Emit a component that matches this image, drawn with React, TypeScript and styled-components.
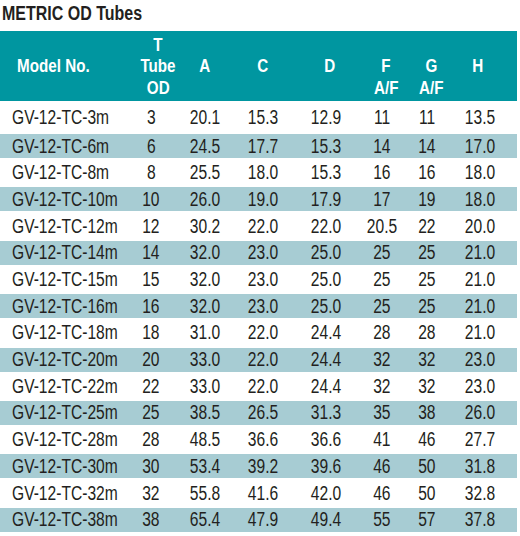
import styled, { createGlobalStyle } from 'styled-components';

const GlobalStyle = createGlobalStyle`
  html, body {
    margin: 0;
    padding: 0;
    background: #ffffff;
  }
  body {
    font-family: "Liberation Sans", Arial, sans-serif;
    color: #231f20;
  }
`;

const COLUMNS = '126px 50px 58px 58px 68px 44px 46px 60px 1fr';

const Page = styled.div`
  width: 517px;
`;

// the source uses a condensed face; squeeze Liberation Sans to match
const Narrow = styled.span<{ $origin?: string }>`
  display: inline-block;
  white-space: nowrap;
  transform: scaleX(0.8);
  transform-origin: ${(p) => p.$origin ?? 'center'};
`;

const Title = styled.h2`
  margin: 0;
  height: 31px;
  padding-left: 2px;
  font-size: 20px;
  font-weight: 700;
  line-height: 27px;
  color: #231f20;
`;

const HeaderRow = styled.div`
  display: grid;
  grid-template-columns: ${COLUMNS};
  height: 70px;
  background: #0096a0;
  color: #ffffff;
  font-weight: 700;
  font-size: 19px;
`;

// shift moves the label off the column centre (px)
const HeaderCell = styled.div<{ $shift?: number }>`
  display: grid;
  grid-template-rows: repeat(3, 21.5px);
  align-content: center;
  justify-items: center;
  padding-left: ${(p) => Math.max(p.$shift ?? 0, 0) * 2}px;
  padding-right: ${(p) => Math.max(-(p.$shift ?? 0), 0) * 2}px;
  line-height: 21.5px;
`;

const HeaderLine = styled.span<{ $row: number }>`
  grid-row: ${(p) => p.$row};
`;

const BodyRow = styled.div<{ $alt: boolean }>`
  display: grid;
  grid-template-columns: ${COLUMNS};
  align-items: center;
  height: ${(p) => (p.$alt ? 24 : 29.4)}px;
  background: ${(p) => (p.$alt ? '#a7ccd3' : '#ffffff')};
  font-size: 19.5px;

  &:first-child {
    height: 33px;
  }
`;

const Cell = styled.div<{ $left?: boolean }>`
  text-align: ${(p) => (p.$left ? 'left' : 'center')};
  padding-left: ${(p) => (p.$left ? '12px' : '0')};
  white-space: nowrap;
`;

const headers: { lines: string[]; start: number; shift?: number }[] = [
  { lines: ['Model No.'], start: 2, shift: -10 },
  { lines: ['T', 'Tube', 'OD'], start: 1, shift: 5 },
  { lines: ['A'], start: 2 },
  { lines: ['C'], start: 2 },
  { lines: ['D'], start: 2, shift: 4 },
  { lines: ['F', 'A/F'], start: 2, shift: 4 },
  { lines: ['G', 'A/F'], start: 2, shift: 4 },
  { lines: ['H'], start: 2, shift: -2 },
];

const rows: string[][] = [
  ['GV-12-TC-3m', '3', '20.1', '15.3', '12.9', '11', '11', '13.5'],
  ['GV-12-TC-6m', '6', '24.5', '17.7', '15.3', '14', '14', '17.0'],
  ['GV-12-TC-8m', '8', '25.5', '18.0', '15.3', '16', '16', '18.0'],
  ['GV-12-TC-10m', '10', '26.0', '19.0', '17.9', '17', '19', '18.0'],
  ['GV-12-TC-12m', '12', '30.2', '22.0', '22.0', '20.5', '22', '20.0'],
  ['GV-12-TC-14m', '14', '32.0', '23.0', '25.0', '25', '25', '21.0'],
  ['GV-12-TC-15m', '15', '32.0', '23.0', '25.0', '25', '25', '21.0'],
  ['GV-12-TC-16m', '16', '32.0', '23.0', '25.0', '25', '25', '21.0'],
  ['GV-12-TC-18m', '18', '31.0', '22.0', '24.4', '28', '28', '21.0'],
  ['GV-12-TC-20m', '20', '33.0', '22.0', '24.4', '32', '32', '23.0'],
  ['GV-12-TC-22m', '22', '33.0', '22.0', '24.4', '32', '32', '23.0'],
  ['GV-12-TC-25m', '25', '38.5', '26.5', '31.3', '35', '38', '26.0'],
  ['GV-12-TC-28m', '28', '48.5', '36.6', '36.6', '41', '46', '27.7'],
  ['GV-12-TC-30m', '30', '53.4', '39.2', '39.6', '46', '50', '31.8'],
  ['GV-12-TC-32m', '32', '55.8', '41.6', '42.0', '46', '50', '32.8'],
  ['GV-12-TC-38m', '38', '65.4', '47.9', '49.4', '55', '57', '37.8'],
];

export default function App() {
  return (
    <Page>
      <GlobalStyle />
      <Title>
        <Narrow $origin="left">METRIC OD Tubes</Narrow>
      </Title>
      <HeaderRow>
        {headers.map((h, i) => (
          <HeaderCell key={i} $shift={h.shift}>
            {h.lines.map((line, j) => (
              <HeaderLine key={j} $row={h.start + j}>
                <Narrow>{line}</Narrow>
              </HeaderLine>
            ))}
          </HeaderCell>
        ))}
      </HeaderRow>
      <div>
        {rows.map((r, i) => (
          <BodyRow key={r[0]} $alt={i % 2 === 1}>
            {r.map((v, j) => (
              <Cell key={j} $left={j === 0}>
                <Narrow $origin={j === 0 ? 'left' : 'center'}>{v}</Narrow>
              </Cell>
            ))}
          </BodyRow>
        ))}
      </div>
    </Page>
  );
}
